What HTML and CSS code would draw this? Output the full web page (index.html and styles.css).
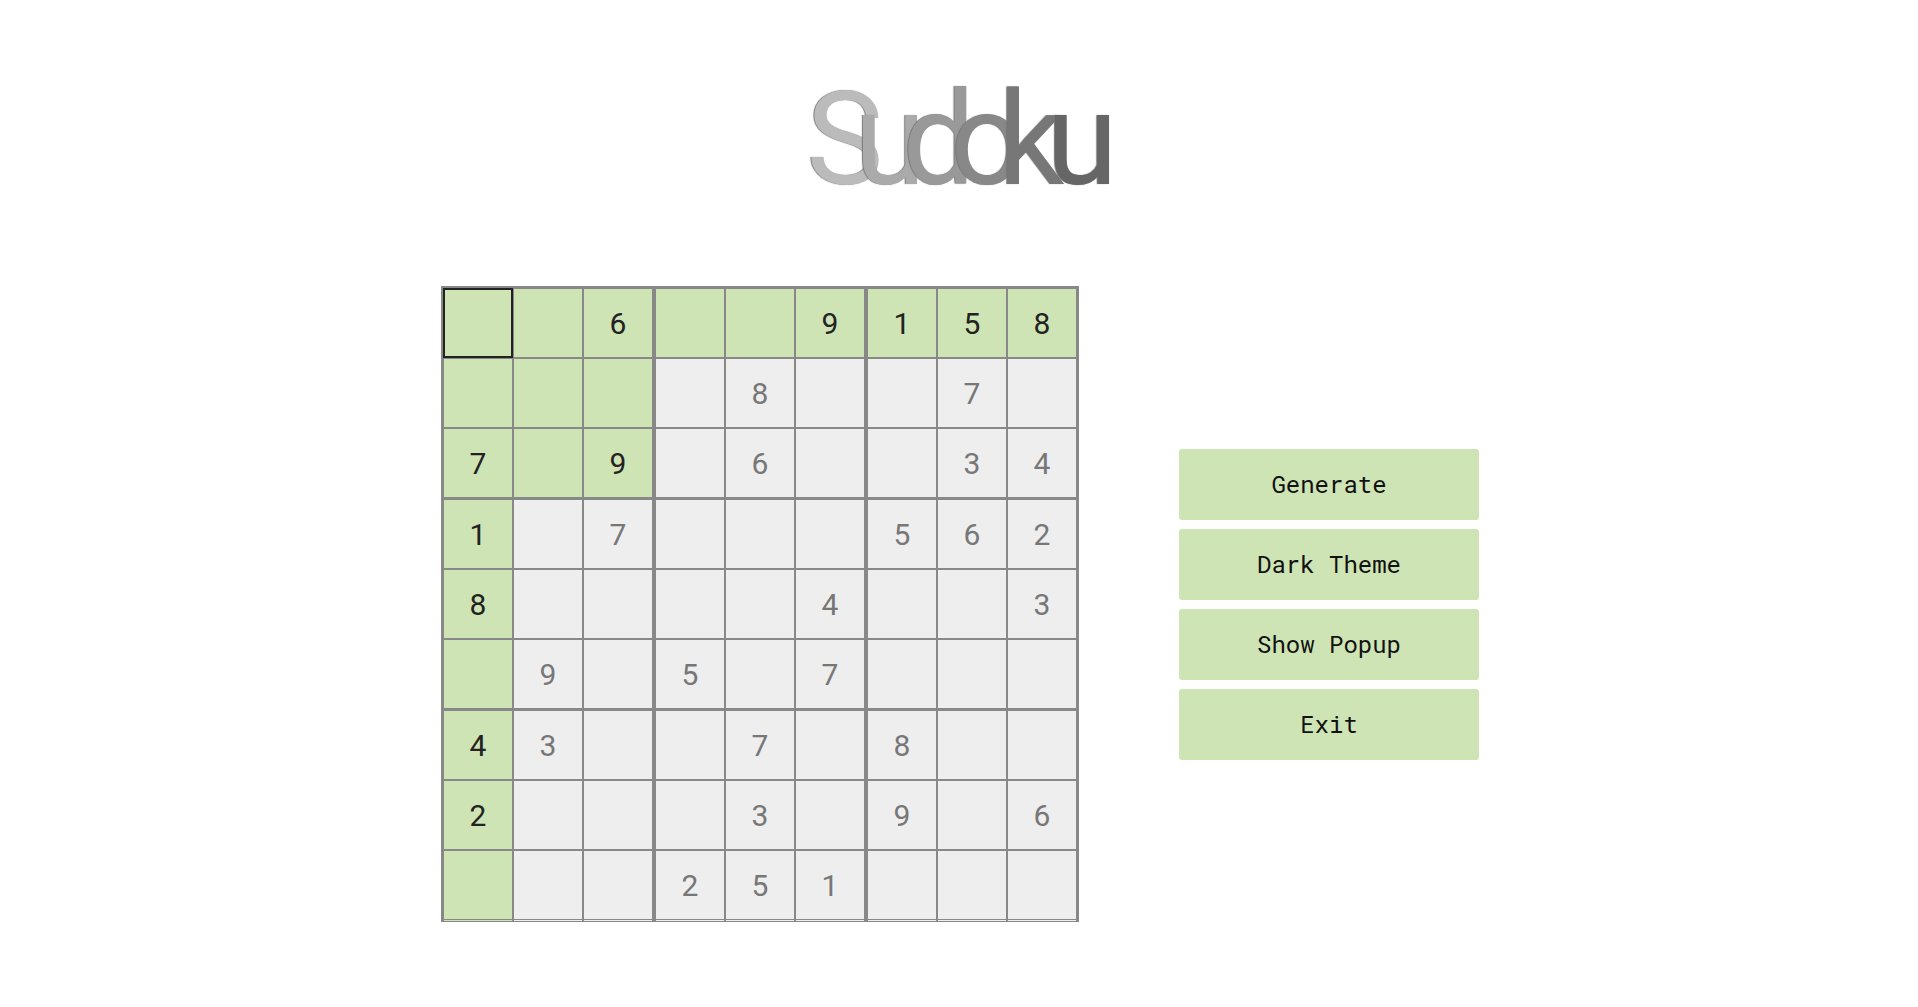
FILE: index.html
```html
<!DOCTYPE html>
<html lang="en">
<head>
<meta charset="utf-8">
<meta name="viewport" content="width=device-width, initial-scale=1">
<title>Sudoku</title>
<link rel="stylesheet" href="styles.css">
</head>
<body>
<header class="header">
<h1 class="logo" aria-label="Sudoku"><span class="letter tone-1">S</span><span class="letter tone-2">u</span><span class="letter tone-3">d</span><span class="letter tone-4">o</span><span class="letter tone-5">k</span><span class="letter tone-6">u</span></h1>
</header>
<main class="game">
<table class="board" aria-label="Sudoku board"><tbody id="board"></tbody></table>
<nav class="menu" aria-label="Game menu">
<button type="button" class="menu-button">Generate</button>
<button type="button" class="menu-button">Dark Theme</button>
<button type="button" class="menu-button">Show Popup</button>
<button type="button" class="menu-button">Exit</button>
</nav>
</main>
<script src="board.js"></script>
</body>
</html>
```
FILE: board.js
```js
const puzzle = [
  "..6..9158",
  "....8..7.",
  "7.9.6..34",
  "1.7...562",
  "8....4..3",
  ".9.5.7...",
  "43..7.8..",
  "2...3.9.6",
  "...251..."
];
const selected = { row: 0, col: 0 };
const body = document.getElementById("board");
const block = n => Math.floor(n / 3);

// Peers share a row, a column or a 3x3 block with the selected cell.
function isPeer(row, col) {
  return row === selected.row || col === selected.col ||
    (block(row) === block(selected.row) && block(col) === block(selected.col));
}

puzzle.forEach((line, row) => {
  const tr = document.createElement("tr");
  [...line].forEach((char, col) => {
    const td = document.createElement("td");
    const input = document.createElement("input");
    td.className = "cell";
    if (isPeer(row, col)) td.classList.add("peer");
    if (row === selected.row && col === selected.col) td.classList.add("selected");
    input.className = "digit";
    input.type = "text";
    input.inputMode = "numeric";
    input.maxLength = 1;
    input.value = char === "." ? "" : char;
    input.readOnly = char !== ".";
    input.setAttribute("aria-label", `Row ${row + 1}, column ${col + 1}`);
    td.append(input);
    tr.append(td);
  });
  body.append(tr);
});
```
FILE: styles.css
```css
* {
  box-sizing: border-box;
}

body {
  margin: 0;
  padding-left: 2px;
  background: #fff;
  color: #222;
  font-family: Roboto, sans-serif;
}

.header {
  display: flex;
  justify-content: center;
  padding: 65px 0 71px 4px;
}

.logo {
  display: flex;
  margin: 0;
  font-size: 130px;
  font-weight: 400;
  line-height: 150px;
}

/* Each letter runs past its box, under the next one. */
.letter {
  width: 48px;
  text-shadow: -1px 0 1px #777;
}

.letter:last-child {
  width: auto;
}

.tone-1 { color: #bbb; }
.tone-2 { color: #aaa; }
.tone-3 { color: #999; }
.tone-4 { color: #888; }
.tone-5 { color: #777; }
.tone-6 { color: #666; }

.game {
  display: flex;
  justify-content: center;
  align-items: center;
  gap: 100px;
  padding-bottom: 60px;
}

.board {
  border: 3px solid #888;
  border-bottom: 0;
  border-spacing: 0;
}

.cell {
  padding: 0;
  border: 0 solid #888;
  border-width: 0 2px 2px 0;
  background: #eee;
}

.cell:nth-child(3n) {
  border-right-width: 4px;
}

.cell:last-child {
  border-right-width: 0;
}

tr:nth-child(3n) .cell {
  border-bottom-width: 3px;
}

tr:nth-child(9) .cell {
  padding-bottom: 1px;
  border-bottom-width: 1px;
}

.digit {
  display: block;
  box-sizing: content-box;
  width: 68px;
  height: 68px;
  padding: 0;
  border: 0;
  outline: 0;
  background: transparent;
  color: #777;
  font: 30px Roboto, sans-serif;
  text-align: center;
}

tr:last-child .digit {
  border-bottom: 1px solid #888;
}

.cell.peer {
  background: #cee4b5;
}

.peer .digit {
  color: #222;
}

.selected .digit {
  outline: 2px solid #222;
  outline-offset: -1px;
}

.menu {
  display: grid;
  gap: 9px;
}

.menu-button {
  width: 300px;
  height: 71px;
  padding: 0;
  border: 0;
  border-radius: 3px;
  background: #cee4b5;
  color: #111;
  font: 24px "Roboto Mono", "Liberation Mono", monospace;
  cursor: pointer;
}
```
